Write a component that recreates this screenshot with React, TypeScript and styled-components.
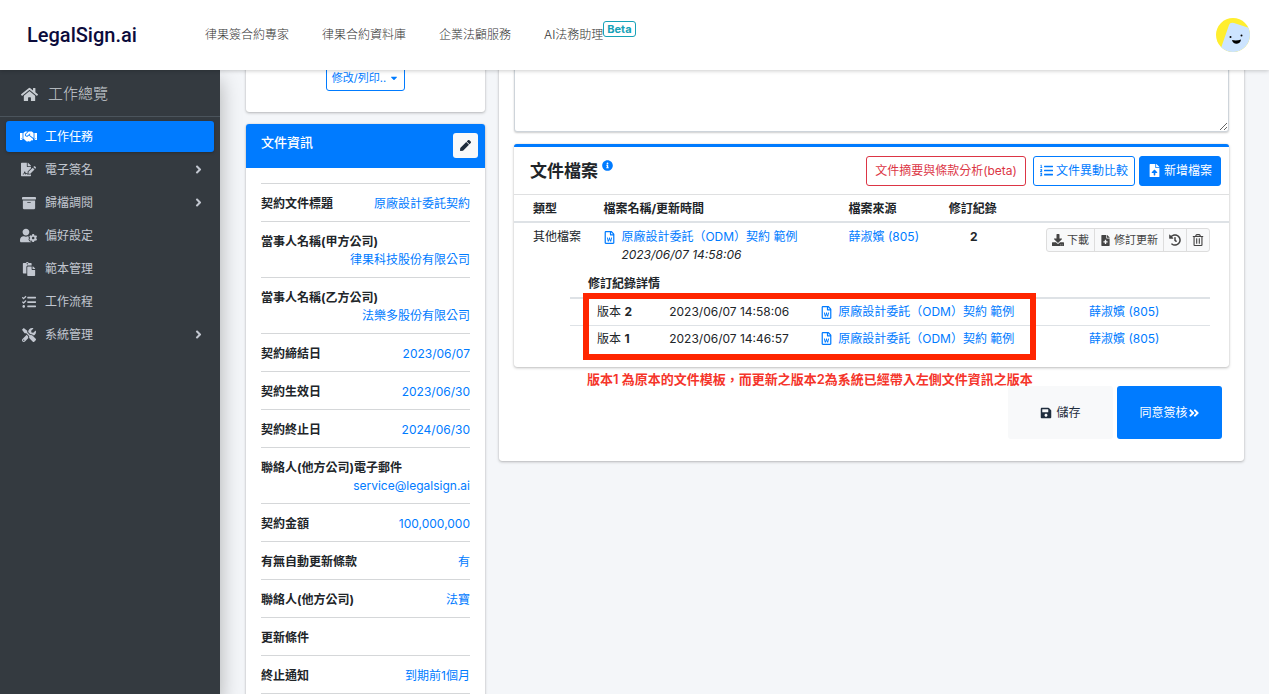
import React from 'react';
import styled, { createGlobalStyle, css } from 'styled-components';
import {
  FaHome, FaHandshake, FaFileSignature, FaArchive, FaUserCog, FaPaste, FaTasks, FaTools,
  FaAngleRight, FaPen, FaInfoCircle, FaListOl, FaFileUpload, FaDownload, FaFileMedical,
  FaHistory, FaRegTrashAlt, FaSave, FaAngleDoubleRight, FaRegFileWord, FaCaretDown,
} from 'react-icons/fa';

const GlobalStyle = createGlobalStyle`
  *, *::before, *::after { box-sizing: border-box; }
  body {
    margin: 0;
    background: #f4f6f9;
    color: #212529;
    font-family: Inter, "Noto Sans CJK TC", sans-serif;
    font-size: 12px;
    line-height: 18px;
  }
  button, textarea { font: inherit; }
  a { color: #007bff; text-decoration: none; }
  svg { flex: none; }
`;

const Page = styled.div`
  height: 100vh;
  display: flex;
  flex-direction: column;
  overflow: hidden;
`;

const Header = styled.header`
  flex: none;
  height: 70px;
  display: flex;
  align-items: center;
  padding: 0 19px 0 27px;
  background: #fff;
  box-shadow: 0 1px 4px rgba(0, 0, 0, 0.2);
  position: relative;
  z-index: 3;
`;

const Logo = styled.a`
  width: 178px;
  color: #0c0c3c;
  font-family: Roboto, sans-serif;
  font-size: 20px;
  font-weight: 500;
  line-height: 24px;
`;

const TopNav = styled.nav`
  flex: 1;
  display: flex;
  gap: 33px;
`;

const TopLink = styled.a`
  display: flex;
  color: #333;
  font-weight: 300;
  white-space: nowrap;
`;

const Beta = styled.span`
  align-self: flex-start;
  height: 16px;
  margin-top: -5px;
  padding: 0 3px;
  border: 1px solid #17a2b8;
  border-radius: 3px;
  color: #17a2b8;
  font-size: 11px;
  font-weight: 700;
  line-height: 14px;
`;

const AvatarButton = styled.button`
  width: 34px;
  height: 34px;
  padding: 0;
  border: 0;
  border-radius: 50%;
  background: none;
  overflow: hidden;
`;

const Body = styled.div`
  flex: 1;
  min-height: 0;
  display: flex;
`;

const Sidebar = styled.aside`
  flex: none;
  width: 220px;
  background: #343a40;
  box-shadow: 0 10px 20px rgba(0, 0, 0, 0.3);
  position: relative;
  z-index: 2;
`;

const Overview = styled.a`
  height: 47px;
  display: flex;
  align-items: center;
  gap: 10px;
  padding: 2px 21px 0;
  border-bottom: 1px solid #4b545c;
  color: #c8cdd2;
  font-size: 15px;
  font-weight: 300;
`;

const Menu = styled.nav`
  display: flex;
  flex-direction: column;
  gap: 2px;
  padding: 4px 6px;
`;

const MenuLink = styled.a<{ $active?: boolean }>`
  height: 31px;
  display: flex;
  align-items: center;
  gap: 8px;
  padding: 0 9px 0 14px;
  border-radius: 3px;
  color: ${p => (p.$active ? '#fff' : '#c2c7d0')};
  ${p => p.$active && css`
    background: #007bff;
    box-shadow: 0 1px 3px rgba(0, 0, 0, 0.25);
  `}
`;

const MenuIcon = styled.span`
  width: 17px;
  display: flex;
  justify-content: center;
  font-size: 14px;
`;

const MenuText = styled.span`
  flex: 1;
`;

const Main = styled.main`
  flex: 1;
  min-width: 0;
  padding: 0 18px 0 19px;
  overflow: hidden;
`;

const Columns = styled.div`
  display: grid;
  grid-template-columns: minmax(0, 1fr) minmax(0, 3fr);
  align-items: start;
  margin-top: -20px;
`;

const Column = styled.div`
  padding: 0 7px;
`;

const Card = styled.section`
  margin-bottom: 12px;
  border-radius: 3px;
  background: #fff;
  box-shadow: 0 0 1px rgba(0, 0, 0, 0.2), 0 1px 3px rgba(0, 0, 0, 0.25);
`;

const PrintCard = styled(Card)`
  height: 62px;
  padding-top: 14px;
  text-align: center;
`;

const PrintButton = styled.button`
  height: 27px;
  display: inline-flex;
  align-items: center;
  gap: 3px;
  padding: 0 5px;
  border: 1px solid #007bff;
  border-radius: 3px;
  background: #fff;
  color: #007bff;
  font-size: 11px;
`;

const InfoHeader = styled.header`
  height: 44px;
  display: flex;
  justify-content: space-between;
  padding: 9px 7px 0 15px;
  border-radius: 3px 3px 0 0;
  background: #007bff;
  color: #fff;
`;

const InfoTitle = styled.h2`
  margin: 0;
  font-size: 13px;
  font-weight: 500;
  line-height: 18px;
`;

const EditButton = styled.button`
  width: 25px;
  height: 25px;
  display: grid;
  place-items: center;
  padding: 0;
  border: 0;
  border-radius: 3px;
  background: #f8f9fa;
  color: #1f2d3d;
  font-size: 11px;
`;

const InfoList = styled.dl`
  margin: 0;
  padding: 15px 15px 16px;
`;

const InfoRow = styled.div`
  display: flex;
  flex-wrap: wrap;
  justify-content: space-between;
  padding: 11px 0 8px;
  border-top: 1px solid #d5d7d9;

  &:last-child { border-bottom: 1px solid #d5d7d9; }
`;

const InfoLabel = styled.dt`
  font-weight: 700;
`;

const InfoValue = styled.dd`
  margin: 0 0 0 auto;
  color: #007bff;
`;

const WorkCard = styled(Card)`
  padding: 0 15px 22px;
`;

const Notes = styled.textarea`
  display: block;
  width: 100%;
  height: 82px;
  border: 1px solid #ced4da;
  border-radius: 3px;
  background: #fff;
  box-shadow: 0 1px 2px rgba(0, 0, 0, 0.2);
  resize: vertical;
`;

const FileCard = styled(Card)`
  margin: 12px 0 0;
  padding-bottom: 15px;
  border-top: 3px solid #007bff;
`;

const FileHeader = styled.header`
  height: 48px;
  display: flex;
  align-items: center;
  padding: 0 8px 0 16px;
  border-bottom: 1px solid #dfe0e1;
`;

const FileTitle = styled.h2`
  flex: 1;
  display: flex;
  gap: 4px;
  margin: 0;
  font-size: 17px;
  font-weight: 600;
  line-height: 24px;
  white-space: nowrap;

  svg { color: #007bff; font-size: 11px; margin-top: 1px; }
`;

const ActionButton = styled.button<{ $tone: 'danger' | 'outline' | 'solid' }>`
  height: 30px;
  display: flex;
  align-items: center;
  gap: 3px;
  margin-left: ${p => (p.$tone === 'outline' ? 7 : 4)}px;
  padding: 0 ${p => (p.$tone === 'outline' ? 6 : 8)}px;
  border: 1px solid ${p => (p.$tone === 'danger' ? '#dc3545' : '#007bff')};
  border-radius: 3px;
  background: ${p => (p.$tone === 'solid' ? '#007bff' : '#fff')};
  color: ${p => (p.$tone === 'danger' ? '#dc3545' : p.$tone === 'solid' ? '#fff' : '#007bff')};
  white-space: nowrap;

  svg { font-size: 13px; }
`;

const Table = styled.table`
  width: 100%;
  border-collapse: collapse;
  table-layout: fixed;
  white-space: nowrap;

  th, td { padding: 0; text-align: left; vertical-align: top; }
`;

const FilesTable = styled(Table)`
  th { height: 27px; padding-top: 5px; border-bottom: 2px solid #dee2e6; }
  td { padding-top: 5px; }
  th:first-child, td:first-child { padding-left: 19px; }
`;

const Centered = styled.td`
  && { text-align: center; font-weight: 700; }
`;

const FileLink = styled.a`
  display: flex;
  align-items: center;
  gap: 5px;

  svg { width: 13px; font-size: 13px; }
`;

const Updated = styled.time`
  display: block;
  padding-left: 18px;
  font-style: italic;
`;

const Toolbar = styled.div`
  display: flex;
  justify-content: flex-end;
  padding-right: 19px;
`;

const ToolButton = styled.button`
  height: 24px;
  display: flex;
  align-items: center;
  gap: 3px;
  margin-left: -1px;
  padding: 0 5px;
  border: 1px solid #ddd;
  background: #f8f9fa;
  color: #444;
  font-size: 11px;

  &:first-child { border-radius: 3px 0 0 3px; }
  &:last-child { border-radius: 0 3px 3px 0; }
`;

const History = styled.section`
  margin: 11px 19px 0 56px;
  position: relative;
`;

const HistoryTitle = styled.h3`
  margin: 0;
  padding: 0 0 4px 18px;
  font-size: 12px;
  font-weight: 700;
  line-height: 18px;
`;

const HistoryTable = styled(Table)`
  border-top: 2px solid #dee2e6;

  td { height: 27px; padding-top: 4px; border-top: 1px solid #dee2e6; }
  td:first-child { padding-left: 27px; }
`;

const Highlight = styled.div`
  position: absolute;
  top: 18px;
  left: 13px;
  width: 453px;
  height: 67px;
  border: 6px solid #ff2600;
  pointer-events: none;
`;

const Remark = styled.p`
  margin: 2px 0 -3px;
  padding-left: 73px;
  color: #f5352b;
  font-size: 13px;
  font-weight: 600;
  line-height: 20px;
  white-space: nowrap;
`;

const Footer = styled.footer`
  display: flex;
  justify-content: flex-end;
  gap: 4px;
  padding-right: 7px;
`;

const FooterButton = styled.button<{ $primary?: boolean }>`
  width: 105px;
  height: 53px;
  display: flex;
  align-items: center;
  justify-content: center;
  gap: ${p => (p.$primary ? 0 : 4)}px;
  padding: 0;
  border: 0;
  border-radius: 3px;
  background: ${p => (p.$primary ? '#007bff' : '#f8f9fa')};
  color: ${p => (p.$primary ? '#fff' : '#1f2d3d')};
`;

const menu = [
  { text: '工作任務', icon: <FaHandshake size={17} />, active: true },
  { text: '電子簽名', icon: <FaFileSignature size={15} />, nested: true },
  { text: '歸檔調閱', icon: <FaArchive />, nested: true },
  { text: '偏好設定', icon: <FaUserCog size={17} /> },
  { text: '範本管理', icon: <FaPaste /> },
  { text: '工作流程', icon: <FaTasks /> },
  { text: '系統管理', icon: <FaTools />, nested: true },
];

const info: [string, string][] = [
  ['契約文件標題', '原廠設計委託契約'],
  ['當事人名稱(甲方公司)', '律果科技股份有限公司'],
  ['當事人名稱(乙方公司)', '法樂多股份有限公司'],
  ['契約締結日', '2023/06/07'],
  ['契約生效日', '2023/06/30'],
  ['契約終止日', '2024/06/30'],
  ['聯絡人(他方公司)電子郵件', 'service@legalsign.ai'],
  ['契約金額', '100,000,000'],
  ['有無自動更新條款', '有'],
  ['聯絡人(他方公司)', '法寶'],
  ['更新條件', ''],
  ['終止通知', '到期前1個月'],
];

const versions = [
  { no: 2, time: '2023/06/07 14:58:06' },
  { no: 1, time: '2023/06/07 14:46:57' },
];

const DOCUMENT = '原廠設計委託（ODM）契約 範例';
const OWNER = '薛淑嬪 (805)';

const Face = () => (
  <svg width="34" height="34" viewBox="0 0 34 34" aria-hidden="true">
    <rect width="34" height="34" fill="#ffee2e" />
    <path d="M5 30 L13 7 Q14 4 18 5 L36 11 V36 H5Z" fill="#cce4ff" />
    <circle cx="14.5" cy="19" r="1" fill="#000" />
    <circle cx="25.5" cy="17.5" r="1" fill="#000" />
    <path d="M16 22 Q20.5 23 25 21.5 Q24.500 25.500 21 25.700 Q17 26 16 22Z" fill="#000" />
  </svg>
);

export default function App() {
  return (
    <Page>
      <GlobalStyle />
      <Header>
        <Logo href="#">LegalSign.ai</Logo>
        <TopNav>
          <TopLink href="#">律果簽合約專家</TopLink>
          <TopLink href="#">律果合約資料庫</TopLink>
          <TopLink href="#">企業法顧服務</TopLink>
          <TopLink href="#">AI法務助理<Beta>Beta</Beta></TopLink>
        </TopNav>
        <AvatarButton aria-label="帳號"><Face /></AvatarButton>
      </Header>
      <Body>
        <Sidebar>
          <Overview href="#"><FaHome size={17} />工作總覽</Overview>
          <Menu>
            {menu.map(m => (
              <MenuLink key={m.text} href="#" $active={m.active}>
                <MenuIcon>{m.icon}</MenuIcon>
                <MenuText>{m.text}</MenuText>
                {m.nested && <FaAngleRight size={13} />}
              </MenuLink>
            ))}
          </Menu>
        </Sidebar>
        <Main>
          <Columns>
            <Column>
              <PrintCard>
                <PrintButton>修改/列印.. <FaCaretDown size={10} /></PrintButton>
              </PrintCard>
              <Card>
                <InfoHeader>
                  <InfoTitle>文件資訊</InfoTitle>
                  <EditButton aria-label="編輯"><FaPen /></EditButton>
                </InfoHeader>
                <InfoList>
                  {info.map(([label, value]) => (
                    <InfoRow key={label}>
                      <InfoLabel>{label}</InfoLabel>
                      <InfoValue>{value}</InfoValue>
                    </InfoRow>
                  ))}
                </InfoList>
              </Card>
            </Column>
            <Column>
              <WorkCard>
                <Notes aria-label="備註" />
                <FileCard>
                  <FileHeader>
                    <FileTitle>文件檔案<FaInfoCircle /></FileTitle>
                    <ActionButton $tone="danger">文件摘要與條款分析(beta)</ActionButton>
                    <ActionButton $tone="outline"><FaListOl />文件異動比較</ActionButton>
                    <ActionButton $tone="solid"><FaFileUpload />新增檔案</ActionButton>
                  </FileHeader>
                  <FilesTable>
                    <colgroup>
                      <col style={{ width: '12.5%' }} />
                      <col style={{ width: '34.3%' }} />
                      <col style={{ width: '14%' }} />
                      <col style={{ width: '7%' }} />
                      <col />
                    </colgroup>
                    <thead>
                      <tr>
                        <th>類型</th>
                        <th>檔案名稱/更新時間</th>
                        <th>檔案來源</th>
                        <th>修訂紀錄</th>
                        <th aria-label="操作" />
                      </tr>
                    </thead>
                    <tbody>
                      <tr>
                        <td>其他檔案</td>
                        <td>
                          <FileLink href="#"><FaRegFileWord />{DOCUMENT}</FileLink>
                          <Updated>2023/06/07 14:58:06</Updated>
                        </td>
                        <td><a href="#">{OWNER}</a></td>
                        <Centered>2</Centered>
                        <td>
                          <Toolbar>
                            <ToolButton><FaDownload size={12} />下載</ToolButton>
                            <ToolButton><FaFileMedical size={11} />修訂更新</ToolButton>
                            <ToolButton aria-label="歷史紀錄"><FaHistory size={12} /></ToolButton>
                            <ToolButton aria-label="刪除"><FaRegTrashAlt size={12} /></ToolButton>
                          </Toolbar>
                        </td>
                      </tr>
                    </tbody>
                  </FilesTable>
                  <History>
                    <HistoryTitle>修訂紀錄詳情</HistoryTitle>
                    <HistoryTable>
                      <colgroup>
                        <col style={{ width: '15.5%' }} />
                        <col style={{ width: '23.6%' }} />
                        <col style={{ width: '42%' }} />
                        <col />
                      </colgroup>
                      <tbody>
                        {versions.map(v => (
                          <tr key={v.no}>
                            <td>版本 <b>{v.no}</b></td>
                            <td>{v.time}</td>
                            <td><FileLink href="#"><FaRegFileWord />{DOCUMENT}</FileLink></td>
                            <td><a href="#">{OWNER}</a></td>
                          </tr>
                        ))}
                      </tbody>
                    </HistoryTable>
                    <Highlight />
                  </History>
                </FileCard>
                <Remark>版本1 為原本的文件模板，而更新之版本2為系統已經帶入左側文件資訊之版本</Remark>
                <Footer>
                  <FooterButton><FaSave />儲存</FooterButton>
                  <FooterButton $primary>同意簽核<FaAngleDoubleRight /></FooterButton>
                </Footer>
              </WorkCard>
            </Column>
          </Columns>
        </Main>
      </Body>
    </Page>
  );
}
